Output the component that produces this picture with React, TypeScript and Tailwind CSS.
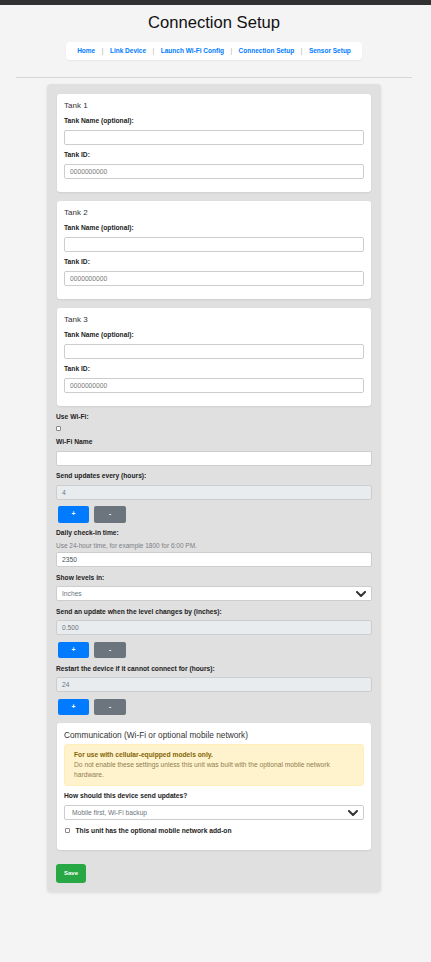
import React from "react"

const tanks = [1, 2, 3]
const links = ["Home", "Link Device", "Launch Wi-Fi Config", "Connection Setup", "Sensor Setup"]

function Label({ children, className = "" }: { children: React.ReactNode; className?: string }) {
    return <label className={"block text-[6.7px] font-bold leading-[8px] text-[#222] " + className}>{children}</label>
}

function TextBox({ value, muted = false, disabled = false }: { value?: string; muted?: boolean; disabled?: boolean }) {
    return (
        <input
            readOnly
            defaultValue={value}
            className={
                "block h-[15px] w-full rounded-[2px] border border-[#cdcdcd] px-[5px] text-[6.7px] leading-[13px] outline-none " +
                (disabled ? "bg-[#e9ecef] text-[#6c757d]" : muted ? "bg-white text-[#777]" : "bg-white text-[#495057]")
            }
        />
    )
}

function SelectBox({ value, pad = "pl-[5px]" }: { value: string; pad?: string }) {
    return (
        <div className={"relative flex h-full w-full items-center rounded-[2px] border border-[#cdcdcd] bg-white text-[6.7px] text-[#6c757d] " + pad}>
            {value}
            <svg className="absolute right-[5px] top-1/2 -translate-y-1/2" width="10" height="6" viewBox="0 0 10 6">
                <polyline points="1,1 5,5 9,1" fill="none" stroke="#333" strokeWidth="2" strokeLinecap="round" strokeLinejoin="round" />
            </svg>
        </div>
    )
}

function Stepper() {
    return (
        <div className="flex gap-[5px] pl-[2px]">
            <button className="h-[16.5px] w-[31px] rounded-[2px] bg-[#007bff] text-[6.7px] font-bold text-white">+</button>
            <button className="h-[16.5px] w-[32px] rounded-[2px] bg-[#6c757d] text-[6.7px] font-bold text-white">-</button>
        </div>
    )
}

export default function App() {
    return (
        <div className="min-h-screen bg-[#f4f4f4] font-['Liberation_Sans',Arial,sans-serif]">
            <div className="h-[5px] bg-[#313033]" />
            <div className="w-[428px]">
                <h1 className="mt-[7.5px] text-center text-[16.6px] font-normal leading-[20px] text-[#111]">Connection Setup</h1>

                <nav className="mx-auto mt-[9.5px] flex h-[18px] w-fit items-center rounded-[4px] bg-white px-[11px] shadow-[0_1px_2px_rgba(0,0,0,0.06)]">
                    {links.map((l, i) => (
                        <React.Fragment key={l}>
                            {i > 0 && <span className="mx-[6.5px] text-[6.5px] text-[#aaa]">|</span>}
                            <span className="text-[6.5px] font-bold text-[#007bff]">{l}</span>
                        </React.Fragment>
                    ))}
                </nav>

                <div className="mx-[16px] mt-[17px] h-px bg-[#d6d6d6]" />

                <div className="mx-auto mt-[6px] w-[334px] rounded-[4px] bg-[#e0e0e0] px-[10px] pb-[9px] pt-[10px] shadow-[0_1px_3px_rgba(0,0,0,0.1)]">
                    {tanks.map((t) => (
                        <div key={t} className={"rounded-[3px] bg-white px-[7px] pb-[13px] pt-[7px] shadow-[0_1px_2px_rgba(0,0,0,0.08)] " + (t < 3 ? "mb-[9px]" : "")}>
                            <div className="mb-[6px] text-[8px] leading-[10px] text-[#333]">Tank {t}</div>
                            <Label className="mb-[5px]">Tank Name (optional):</Label>
                            <TextBox />
                            <Label className="mb-[5px] mt-[6px]">Tank ID:</Label>
                            <TextBox value="0000000000" muted />
                        </div>
                    ))}

                    <div className="-mx-px">
                        <Label className="mt-[7.3px]">Use Wi-Fi:</Label>
                        <div className="mt-[5px] h-[4.5px] w-[4.5px] rounded-[1px] border border-[#888] bg-white" />

                        <Label className="mb-[4.6px] mt-[7.2px]">Wi-Fi Name</Label>
                        <TextBox />

                        <Label className="mb-[4.3px] mt-[6.7px]">Send updates every (hours):</Label>
                        <TextBox value="4" disabled />
                        <div className="mt-[6.7px]"><Stepper /></div>

                        <Label className="mt-[6px]">Daily check-in time:</Label>
                        <div className="mt-[5.5px] text-[6.5px] leading-[7px] text-[#7a7f85]">Use 24-hour time, for example 1800 for 6:00 PM.</div>
                        <div className="mt-[3px]"><TextBox value="2350" /></div>

                        <Label className="mb-[4px] mt-[7.2px]">Show levels in:</Label>
                        <div className="h-[14.6px]"><SelectBox value="Inches" /></div>

                        <Label className="mb-[4px] mt-[7.2px]">Send an update when the level changes by (inches):</Label>
                        <TextBox value="0.500" disabled />
                        <div className="mt-[6.5px]"><Stepper /></div>

                        <Label className="mb-[4.2px] mt-[6.5px]">Restart the device if it cannot connect for (hours):</Label>
                        <TextBox value="24" disabled />
                        <div className="mt-[6.8px]"><Stepper /></div>
                    </div>

                    <div className="mt-[7.5px] rounded-[3px] bg-white px-[7px] pb-[15px] pt-[7px] shadow-[0_1px_2px_rgba(0,0,0,0.08)]">
                        <div className="mb-[4.3px] text-[8.3px] leading-[10px] text-[#333]">Communication (Wi-Fi or optional mobile network)</div>
                        <div className="rounded-[3px] border border-[#ffeeba] bg-[#fff3cd] px-[9px] pb-[5px] pt-[4.5px] text-[6.7px] leading-[10px]">
                            <div className="font-bold text-[#856404]">For use with cellular-equipped models only.</div>
                            <div className="text-[#8f7d4f]">
                                Do not enable these settings unless this unit was built with the optional mobile network
                                <br />
                                hardware.
                            </div>
                        </div>
                        <Label className="mb-[5px] mt-[6.3px]">How should this device send updates?</Label>
                        <div className="h-[15.7px]">
                            <SelectBox value="Mobile first, Wi-Fi backup" pad="pl-[7px]" />
                        </div>
                        <div className="mt-[6.3px] flex items-center gap-[5.5px] pl-[1px]">
                            <span className="h-[5px] w-[5px] rounded-[1px] border border-[#888] bg-white" />
                            <span className="text-[6.7px] font-bold leading-[8px] text-[#222]">This unit has the optional mobile network add-on</span>
                        </div>
                    </div>

                    <button className="-ml-px mt-[14px] block h-[19.7px] w-[30px] rounded-[3px] bg-[#28a745] text-[6px] font-bold text-white">Save</button>
                </div>
            </div>
        </div>
    )
}
